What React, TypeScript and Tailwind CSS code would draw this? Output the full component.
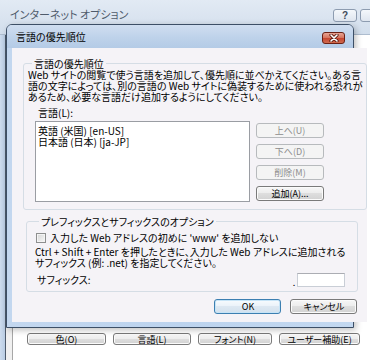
import React from "react";

// Windows 7 style: "言語の優先順位" dialog over インターネット オプション

type ButtonProps = {
  label: string;
  className?: string;
  disabled?: boolean;
  primary?: boolean;
};

const WinButton: React.FC<ButtonProps> = ({ label, className = "", disabled = false, primary = false }) => {
  const tone = disabled
    ? "border-[#b7babd] bg-[#f4f4f4] text-[#8c8c8c]"
    : primary
    ? "border-[#3c7fb1] bg-[linear-gradient(#f7fbfe,#eaf2f9_50%,#dde8f2_50%,#d3e1ee)] text-black shadow-[inset_0_0_0_1px_#c6e4f7]"
    : "border-[#7a7a7a] bg-[linear-gradient(#f7f7f7,#ececec_50%,#dedede_50%,#d2d2d2)] text-black shadow-[inset_0_0_0_1px_#fbfbfb]";
  return (
    <div className={`flex items-center justify-center rounded-[3px] border text-[9px] leading-none ${tone} ${className}`}>
      {label}
    </div>
  );
};

const StripLine: React.FC<{ className: string }> = ({ className }) => (
  <div className={`h-px w-[5px] ml-[2px] bg-[#b4b4b4] ${className}`} />
);

const StripButton: React.FC<{ className: string }> = ({ className }) => (
  <div
    className={`h-[14px] w-[6px] rounded-r-[3px] border border-l-0 border-[#8a8a8a] bg-[linear-gradient(#f6f6f6,#e9e9e9_50%,#dadada_50%,#cfcfcf)] ${className}`}
  />
);

const App: React.FC = () => {
  const bottomButtons = [
    { label: "色(O)", w: "w-[79px]" },
    { label: "言語(L)", w: "w-[78px]" },
    { label: "フォント(N)", w: "w-[74px]" },
    { label: "ユーザー補助(E)", w: "w-[81px]" },
  ];

  return (
    <div className="relative w-[370px] h-[360px] overflow-hidden bg-white font-['Noto_Sans_CJK_JP',sans-serif] [font-feature-settings:'palt']">
      {/* Background window */}
      <div className="flex flex-col h-full">
        <div className="h-[35px] shrink-0 flex items-start bg-[linear-gradient(#e2eaf4,#d2deec)] border-b border-[#aebdcf]">
          <span className="flex-1 min-w-0 pl-[10px] mt-[8px] text-[11px] leading-[13px] text-[#4f5b6b] whitespace-nowrap">
            インターネット オプション
          </span>
          <div className="flex gap-[3px] mt-[9px] mr-[-14px] shrink-0">
            <div className="w-[24px] h-[13px] rounded-[3px] border border-[#8d9cb0] bg-[linear-gradient(#f4f7fb,#dfe6ef)] flex items-center justify-center text-[10px] leading-none font-bold text-[#3f4a59] font-['Liberation_Sans',sans-serif]">
              ?
            </div>
            <div className="w-[24px] h-[13px] rounded-[3px] border border-[#8d9cb0] bg-[linear-gradient(#f4f7fb,#dfe6ef)]" />
          </div>
        </div>

        <div className="flex flex-1 min-h-0">
          <div className="w-[5px] bg-[linear-gradient(90deg,#cddcee,#b9cce3)]" />
          <div className="w-px bg-[#4d5a6b]" />
          <div className="w-[6px] bg-[#f0f0f0]" />
          <div className="flex-1 flex flex-col border-l border-[#a7a7a7] bg-white">
            <div className="flex-1 flex justify-end pr-[9px]">
              <div className="w-[8px] flex flex-col">
                <StripLine className="mt-[25px]" />
                <div className="mt-[6px] h-[11px] text-[9px] leading-[11px] text-black">ア</div>
                <div className="mt-[10px] h-[34px] ml-[2px] border-l border-[#cfd3d8]" />
                <StripButton className="mt-[6px]" />
                <StripLine className="mt-[13px]" />
                <StripButton className="mt-[52px]" />
                <StripLine className="mt-[10px]" />
                <StripButton className="mt-[7px]" />
                <StripLine className="mt-[21px]" />
                <StripButton className="mt-[7px]" />
                <StripLine className="mt-[23px]" />
              </div>
            </div>
            <div className="flex gap-[7px] pl-[14px] pb-[15px]">
              {bottomButtons.map((b) => (
                <WinButton key={b.label} label={b.label} className={`h-[12px] shrink-0 ${b.w}`} />
              ))}
            </div>
          </div>
        </div>
      </div>

      {/* Dialog: 言語の優先順位 */}
      <div className="absolute left-[6px] top-[24px] w-[348px] h-[304px] flex flex-col rounded-t-[6px] border border-[#3d4f66] bg-[linear-gradient(90deg,#c3d7ef,#bcd3ee_50%,#c3d8f0)] shadow-[2px_2px_6px_rgba(0,0,0,0.25)]">
        <div className="h-[23px] shrink-0 flex items-center justify-between pl-[9px] pr-[8px] rounded-t-[5px] bg-[linear-gradient(#d0def0,#bed2ea_55%,#b4cbe6)]">
          <span className="text-[10px] leading-[12px] text-black whitespace-nowrap">言語の優先順位</span>
          <div className="mt-[2px] w-[23px] h-[12px] rounded-[3px] border border-[#6b2014] bg-[linear-gradient(#e9a494,#d67762_45%,#c5442f_50%,#cf6a4f)] flex items-center justify-center">
            <svg width="10" height="8" viewBox="0 0 10 8">
              <path d="M2 1 L8 7 M8 1 L2 7" stroke="#5b1a10" strokeWidth="3.2" strokeLinecap="round" />
              <path d="M2 1 L8 7 M8 1 L2 7" stroke="#ffffff" strokeWidth="1.6" strokeLinecap="round" />
            </svg>
          </div>
        </div>

        <div className="flex-1 flex px-[5px] pb-[5px]">
          <div className="flex-1 flex flex-col bg-[#f5f3f7] text-black">
            {/* Group 1 */}
            <fieldset className="ml-[11px] mt-[10px] w-[312px] h-[152px] rounded-[3px] border border-[#d5dde5] px-[4px]">
              <legend className="ml-[4px] px-[2px] text-[10px] leading-[11px] whitespace-nowrap">言語の優先順位</legend>
              <div className="text-[10px] leading-[11px] whitespace-nowrap">
                <div>Web サイトの閲覧で使う言語を追加して、優先順に並べかえてください。ある言</div>
                <div>語の文字によっては、別の言語の Web サイトに偽装するために使われる恐れが</div>
                <div>あるため、必要な言語だけ追加するようにしてください。</div>
              </div>
              <div className="mt-[5px] ml-[10px] text-[10px] leading-[11px]">言語(L):</div>
              <div className="mt-[3px] flex">
                <div className="ml-[7px] w-[215px] h-[81px] border border-[#9a9da3] bg-white pt-[3px] pl-[2px] text-[10px] leading-[11px] whitespace-nowrap">
                  <div>英語 (米国) [en-US]</div>
                  <div>日本語 (日本) [ja-JP]</div>
                </div>
                <div className="ml-[6px] mt-[2px] flex flex-col gap-[6px]">
                  <WinButton label="上へ(U)" disabled className="w-[68px] h-[15px]" />
                  <WinButton label="下へ(D)" disabled className="w-[68px] h-[15px]" />
                  <WinButton label="削除(M)" disabled className="w-[68px] h-[15px]" />
                  <WinButton label="追加(A)..." className="w-[68px] h-[15px]" />
                </div>
              </div>
            </fieldset>

            {/* Group 2 */}
            <fieldset className="ml-[14px] mt-[6px] w-[310px] h-[76px] rounded-[3px] border border-[#d5dde5] pl-[8px] pr-[12px]">
              <legend className="ml-[4px] px-[2px] text-[10px] leading-[11px] whitespace-nowrap">
                プレフィックスとサフィックスのオプション
              </legend>
              <div className="mt-[5px] ml-[1px] flex items-center gap-[4px] text-[10px] leading-[11px] whitespace-nowrap">
                <div className="w-[10px] h-[10px] border border-[#8e8f8f] bg-[linear-gradient(135deg,#d6d6d6,#f7f7f7)] shadow-[inset_0_0_0_1px_#f4f4f4]" />
                <span>入力した Web アドレスの初めに 'www' を追加しない</span>
              </div>
              <div className="mt-[3px] text-[10px] leading-[11px] whitespace-nowrap">
                <div>Ctrl + Shift + Enter を押したときに、入力した Web アドレスに追加される</div>
                <div>サフィックス (例: .net) を指定してください。</div>
              </div>
              <div className="mt-[4px] flex items-center text-[10px] leading-[11px]">
                <span className="ml-[2px]">サフィックス:</span>
                <span className="ml-auto mt-[6px] text-[9px] leading-none">.</span>
                <div className="ml-[2px] w-[48px] h-[14px] border border-[#c9ced6] border-t-[#abadb3] bg-white" />
              </div>
            </fieldset>

            <div className="mt-[7px] flex justify-end gap-[9px] pr-[10px]">
              <WinButton label="OK" primary className="w-[67px] h-[15px]" />
              <WinButton label="キャンセル" className="w-[67px] h-[15px]" />
            </div>
          </div>
        </div>
      </div>
    </div>
  );
};

export default App;
